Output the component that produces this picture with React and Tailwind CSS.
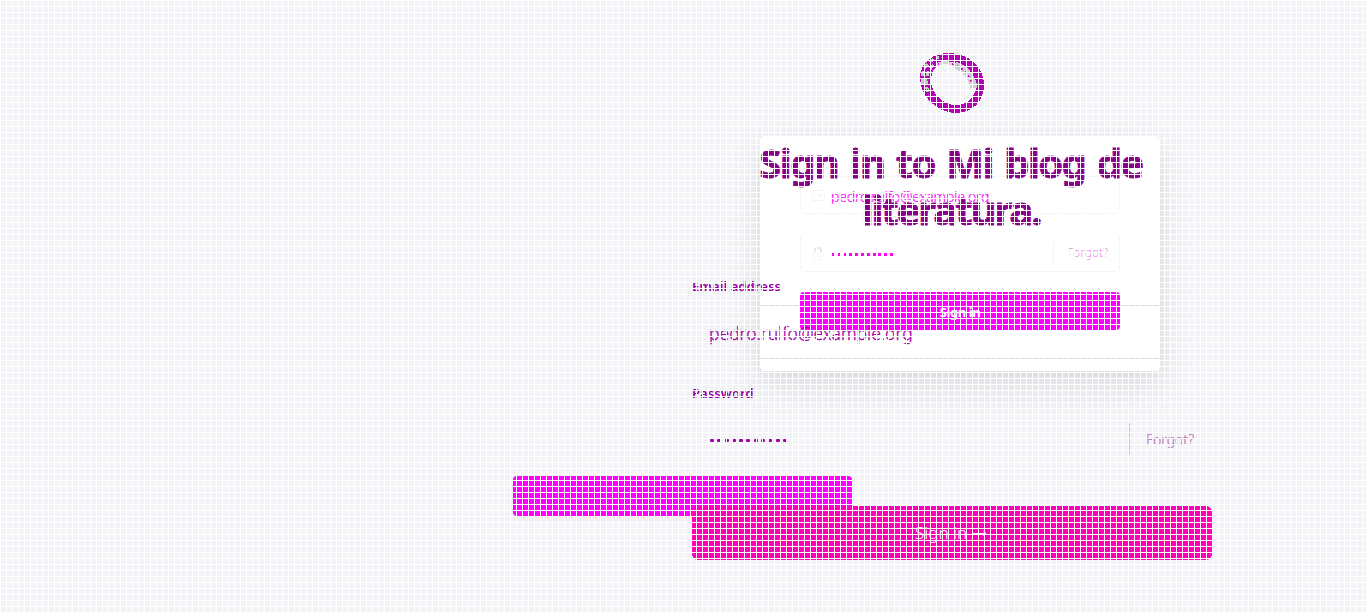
const layer = 'col-start-1 row-start-1 flex flex-col items-start';

function Ring() {
  return (
    <svg width="68" height="64" viewBox="918 51 68 64" fill="none" shapeRendering="crispEdges">
      <path
        fillRule="evenodd"
        fill="#b400b4"
        d="M949 53C967 53 984 66 984 84C984 101 973 113 956 113C938 113 920 97 920 78C920 63 932 53 949 53ZM949 62C938 62 931 69 931 79C931 93 942 105 956 105C968 105 976 96 976 86C976 73 963 62 949 62Z"
      />
      <path d="M923 84C920 71 928 60 939 57M928 92C924 81 927 68 937 63" stroke="#c8c8c8" strokeWidth="3" strokeDasharray="5 3" />
      <path d="M936 65C944 61 949 62 956 66" stroke="#d4d4d4" strokeWidth="3" />
      <path d="M955 65C966 69 972 77 974 88" stroke="#cccccc" strokeWidth="7" />
      <path d="M925 87C923 73 928 65 936 60M929 96C924 81 931 71 939 64M952 64C962 67 970 74 973 87" stroke="#d414d4" strokeWidth="1.5" strokeDasharray="2 3" />
    </svg>
  );
}

function Dots({ className, dot, count = 11 }) {
  return (
    <span className={`flex ${className}`}>
      {Array.from({ length: count }, (_, i) => (
        <i key={i} className={dot} />
      ))}
    </span>
  );
}

function CardForm() {
  return (
    <div className={`${layer} pl-[760px] pt-[136px]`}>
      <div className="flex h-[235px] w-[400px] flex-col rounded-[5px] bg-white px-10 pt-10 shadow-[0_15px_35px_rgba(40,40,40,0.1),0_5px_15px_rgba(0,0,0,0.03)]">
        <div className="flex h-[38px] items-center rounded border border-[#f3f5f7] pl-[11px]">
          <svg width="13" height="11" viewBox="0 0 13 11" fill="none" stroke="#f2f2f2">
            <rect x=".5" y=".5" width="12" height="10" rx="1" />
            <path d="m1 2 5.500 4L12 2M1 9l4-4m3 0 4 4" />
          </svg>
          <span className="ml-[6px] mt-[3px] whitespace-nowrap text-[14px] font-light leading-5 tracking-[-0.2px] text-[#ff00ff] [-webkit-text-stroke:0.2px_#ff00ff]">pedro.rulfo@example.org</span>
        </div>
        <div className="mt-[20px] flex h-[38px] items-center rounded border border-[#f0f3f5] pl-[11px]">
          <svg width="12" height="13" viewBox="0 0 12 13" fill="none">
            <path d="M3 6V3.500a3 3 0 0 1 6 0V6" stroke="#dfe8ef" strokeWidth="2" />
            <path d="M1 6.500h10v6H1z" stroke="#f2f2f2" />
            <path d="M5 8v3m3-3v3" stroke="#eeeeee" />
          </svg>
          <Dots className="ml-[8px] mt-[2px] gap-[2.800px]" dot="size-[3px] bg-[#ff00ff]" />
          <span className="ml-auto flex h-6 w-[66px] items-center border-l border-[#f4f4f4] pl-[13px] text-[12px] font-light text-[#ea8aea]">Forgot?</span>
        </div>
      </div>
    </div>
  );
}

function CardRules() {
  return (
    <div className={`${layer} pl-[760px] pt-[305px]`}>
      <div className="h-[54px] w-[400px] border-y border-[#dadada]" />
    </div>
  );
}

export default function App() {
  return (
    <main className="grid h-[612px] w-[1366px] grid-cols-1 grid-rows-1 overflow-hidden bg-[#f2f3f7] font-['Noto_Sans',sans-serif]">
      <CardForm />
      <CardRules />
      <div className={`${layer} pl-[800px] pt-[292px]`}>
        <button className="h-[38px] w-[320px] rounded bg-[#ff00ff] pt-[4px] text-[13px] font-bold tracking-[-0.4px] text-white">Sign in</button>
      </div>
      <div className={`${layer} pl-[513px] pt-[476px]`}>
        <div className="h-[40px] w-[339px] rounded bg-[#ff00ff] shadow-[0_2px_5px_rgba(50,50,50,0.05)]" />
      </div>
      <div className={`${layer} pl-[918px] pt-[51px]`}>
        <Ring />
      </div>
      <div className={`${layer} pl-[751px] pt-[139px]`}>
        <h1 className="w-[400px] whitespace-nowrap text-center text-[40px] font-bold leading-[47px] tracking-[-1.6px] text-[#8b008b] [-webkit-text-stroke:0.8px_#8b008b] [word-spacing:2.600px]">
          Sign in to Mi blog de
          <br />
          <span className="tracking-[-2.1px]">literatura.</span>
        </h1>
      </div>
      <form className={`${layer} pl-[692px] pt-[276px]`}>
        <label className="-ml-px h-5 pl-px text-[13.200px] font-semibold leading-5 text-[#9b009f]">Email address</label>
        <span className="ml-[17px] mt-[25px] h-6 text-[17.500px] font-light leading-6 text-[#a600a6] [-webkit-text-stroke:0.3px_#a600a6]">pedro.rulfo@example.org</span>
        <label className="mt-[38px] h-5 text-[13.200px] font-semibold leading-5 text-[#9b009f]">Password</label>
        <div className="mt-[20px] flex h-[31px] w-[520px] items-center pl-[18px]">
          <Dots className="mt-[3px] gap-[3.300px]" dot="h-[3px] w-[4px] rounded-[1px] bg-[#a000a5]" />
          <span className="ml-auto flex h-full w-[83px] items-center border-l border-[#c6c6c6] pl-4 pt-[2px] text-[14px] font-light text-[#b76fb7] [-webkit-text-stroke:0.2px_#b76fb7]">Forgot?</span>
        </div>
        <button type="button" className="mt-[52px] flex h-[54px] w-[520px] items-center rounded-md bg-[#ff00b8] pl-[223px] text-[17px] font-light text-white">
          Sign in
          <svg className="ml-[6px]" width="14" height="7" viewBox="0 0 14 7" fill="none" stroke="white">
            <path d="M0 3.500h13M10.500 1.500l2.500 2-2.500 2" />
          </svg>
        </button>
      </form>
      <div className="pointer-events-none col-start-1 row-start-1 bg-[linear-gradient(to_right,white_1px,transparent_1px),linear-gradient(to_bottom,white_1px,transparent_1px)] bg-[size:6px_6px]" />
    </main>
  );
}
